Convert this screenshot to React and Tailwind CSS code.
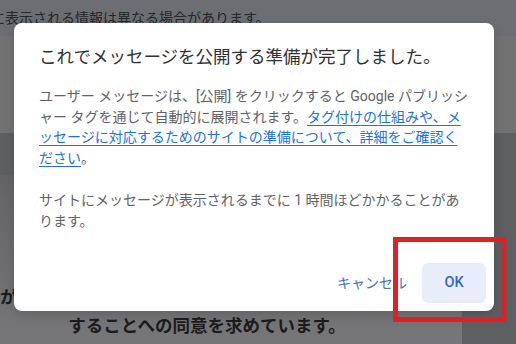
export default function App() {
  const font = { fontFamily: 'Roboto, "Noto Sans CJK JP", sans-serif' };
  return (
    <div
      className="relative w-[516px] h-[344px] overflow-hidden flex flex-col bg-[#6a6a6c]"
      style={font}
    >
      {/* background page (dimmed) */}
      <div className="h-[36px] shrink-0 bg-[#6c6e74] flex items-center">
        <div className="ml-[-9px] text-[14px] leading-[20px] text-[#26272a] whitespace-nowrap">
          に表示される情報は異なる場合があります。
        </div>
      </div>
      <div className="h-[97px] shrink-0 bg-[#727273]" />
      <div className="h-[42px] shrink-0 bg-[#5e5f61]" />
      <div className="flex-1 flex">
        <div className="flex-1 bg-gradient-to-b from-[#646466] to-[#777779] flex flex-col justify-end pb-[3px]">
          <div className="w-[414px] text-center text-[17.5px] font-bold leading-[29px] text-[#1c1c1e] whitespace-nowrap">
            がウェブサイトの利用目的に沿って個人データを使用
            <br />
            することへの同意を求めています。
          </div>
        </div>
        <div className="w-[54px] bg-[#5e5f61]" />
      </div>

      {/* dialog */}
      <div className="absolute left-[14px] top-[23px] w-[480px] h-[288px] bg-white rounded-[8px] flex flex-col shadow-[0_4px_12px_rgba(0,0,0,0.15)]">
        <div className="pl-[25px] pt-[22px] text-[17.5px] leading-[24px] text-[#303134] whitespace-nowrap">
          これでメッセージを公開する準備が完了しました。
        </div>
        <div className="pl-[25px] mt-[17px] text-[14px] leading-[20.5px] text-[#5f6368] whitespace-nowrap">
          <p>
            ユーザー メッセージは、[公開] をクリックすると Google パブリッシ
            <br />
            ャー タグを通じて自動的に展開されます。
            <a className="text-[#1a73e8] underline underline-offset-[3px]">
              タグ付けの仕組みや、メ
              <br />
              ッセージに対応するためのサイトの準備について、詳細をご確認く
              <br />
              ださい
            </a>
            。
          </p>
          <p className="mt-[22px]">
            サイトにメッセージが表示されるまでに 1 時間ほどかかることがあ
            <br />
            ります。
          </p>
        </div>
        <div className="mt-auto flex justify-end items-center gap-[8px] pr-[8px] pb-[8px]">
          <button className="h-[40px] px-[7px] text-[14px] text-[#4a72c6] rounded-[6px]">
            キャンセル
          </button>
          <button className="h-[40px] w-[64px] rounded-[6px] bg-[#e8edf9] text-[14.5px] font-medium text-[#3566c8]">
            OK
          </button>
        </div>
      </div>

      {/* red annotation */}
      <div className="absolute left-[393px] top-[237px] w-[113px] h-[85px] border-[5px] border-[#e41e26]" />
    </div>
  );
}
